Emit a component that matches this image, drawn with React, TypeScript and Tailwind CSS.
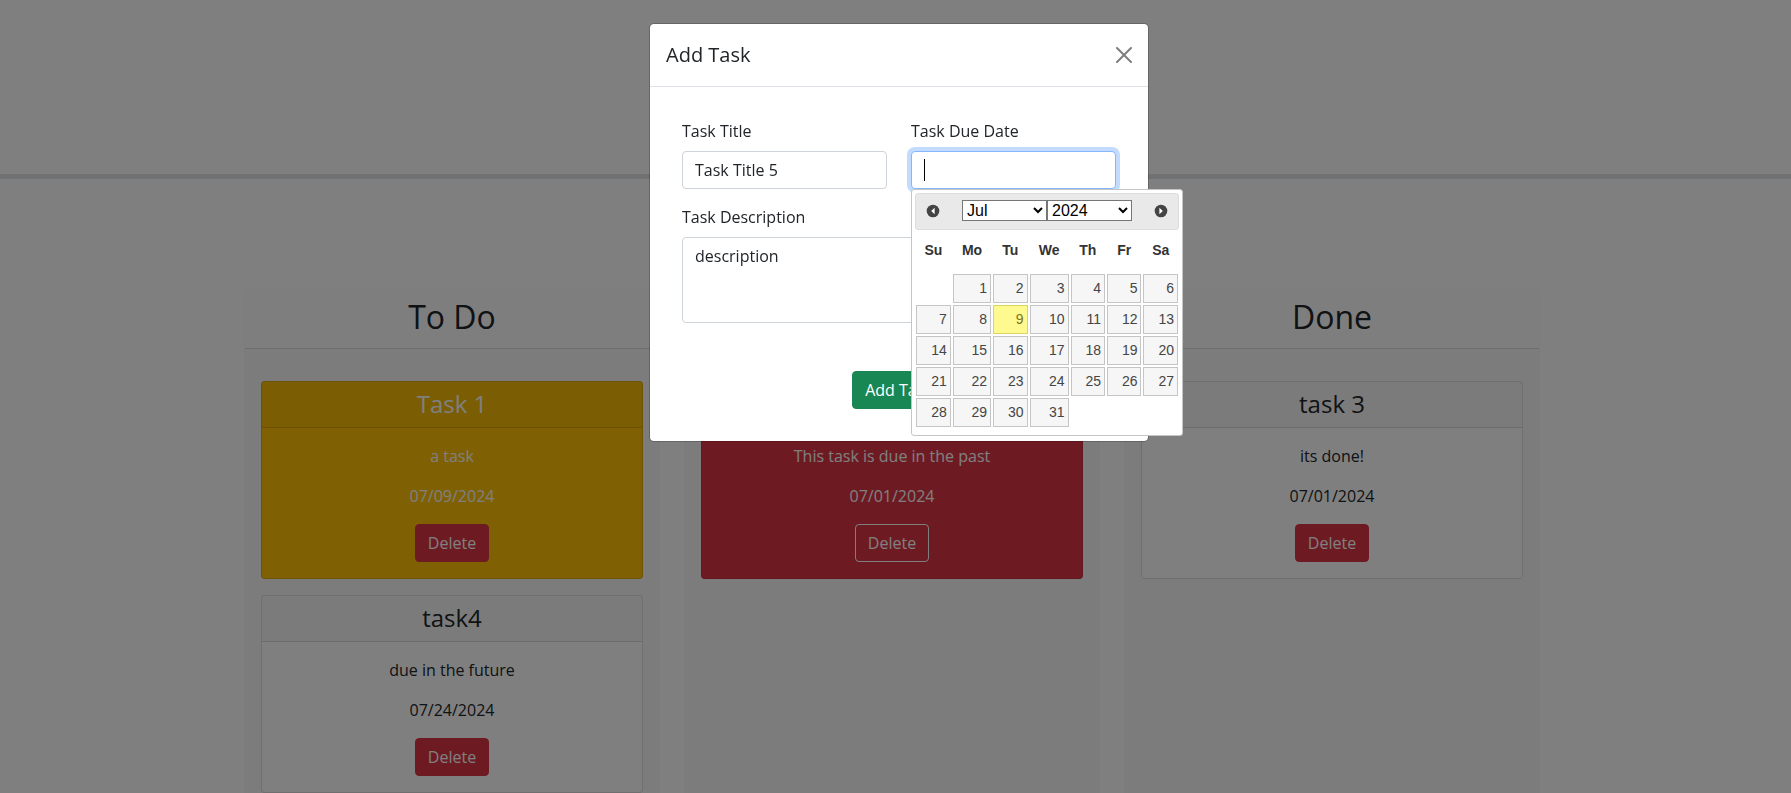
import { useState } from "react";

type Tone = "plain" | "warning" | "danger";
type Task = { title: string; description: string; due: string; tone: Tone };
type Lane = { name: string; tasks: Task[] };

const lanes: Lane[] = [
  {
    name: "To Do",
    tasks: [
      { title: "Task 1", description: "a task", due: "07/09/2024", tone: "warning" },
      { title: "task4", description: "due in the future", due: "07/24/2024", tone: "plain" },
    ],
  },
  {
    name: "In Progress",
    tasks: [
      { title: "task 2", description: "This task is due in the past", due: "07/01/2024", tone: "danger" },
    ],
  },
  {
    name: "Done",
    tasks: [{ title: "task 3", description: "its done!", due: "07/01/2024", tone: "plain" }],
  },
];

const cardTone: Record<Tone, string> = {
  plain: "bg-white text-[#212529]",
  warning: "bg-[#ffc107] text-white",
  danger: "bg-[#dc3545] text-white",
};

const months = ["Jan", "Feb", "Mar", "Apr", "May", "Jun", "Jul", "Aug", "Sep", "Oct", "Nov", "Dec"];
const years = ["2023", "2024", "2025"];
const weekdays = ["Su", "Mo", "Tu", "We", "Th", "Fr", "Sa"];
const weeks = Array.from({ length: 5 }, (_, w) =>
  Array.from({ length: 7 }, (_, d) => {
    const day = w * 7 + d;
    return day >= 1 && day <= 31 ? day : null;
  }),
);
const today = 9;

function TaskCard({ task }: { task: Task }) {
  return (
    <article className={`rounded border border-black/[.125] text-center ${cardTone[task.tone]}`}>
      <h4 className="border-b border-black/[.125] bg-black/[.03] px-4 pt-2 pb-[9px] text-2xl leading-7">
        {task.title}
      </h4>
      <div className="flex flex-col items-center gap-4 p-4">
        <p>{task.description}</p>
        <p>{task.due}</p>
        <button
          type="button"
          className={`rounded border bg-[#dc3545] px-3 py-[6px] text-white ${
            task.tone === "danger" ? "border-white" : "border-[#dc3545]"
          }`}
        >
          Delete
        </button>
      </div>
    </article>
  );
}

function CircleArrow({ flip = false }: { flip?: boolean }) {
  return (
    <svg viewBox="0 0 12 12" className={`size-3 overflow-visible ${flip ? "-scale-x-100" : ""}`} aria-hidden="true">
      <circle cx="6" cy="6" r="6.3" fill="#444" />
      <path d="M7.6 2.8v6.4L4.2 6z" fill="#fff" />
    </svg>
  );
}

function DatePicker() {
  const [month, setMonth] = useState("Jul");
  const [year, setYear] = useState("2024");
  const selectClass =
    "h-[21px] min-w-0 flex-1 border border-[#767676] bg-white text-base leading-[19px] text-black";
  return (
    <div className="absolute top-full left-0 z-10 h-[247px] w-[272px] rounded-[3px] border border-[#c5c5c5] bg-white p-[3px] font-['Liberation_Sans',Arial,sans-serif] text-[#333]">
      <div className="flex h-[37px] items-center justify-between rounded-[3px] border border-[#ddd] bg-[#e9e9e9] px-[11px] pb-[2px]">
        <button type="button" aria-label="Prev">
          <CircleArrow />
        </button>
        <div className="flex w-[170px]">
          <select aria-label="Month" value={month} onChange={(e) => setMonth(e.target.value)} className={selectClass}>
            {months.map((m) => (
              <option key={m}>{m}</option>
            ))}
          </select>
          <select aria-label="Year" value={year} onChange={(e) => setYear(e.target.value)} className={selectClass}>
            {years.map((y) => (
              <option key={y}>{y}</option>
            ))}
          </select>
        </div>
        <button type="button" aria-label="Next">
          <CircleArrow flip />
        </button>
      </div>
      <table className="w-full border-collapse text-[14px] leading-[21px]">
        <thead>
          <tr>
            {weekdays.map((d) => (
              <th key={d} scope="col" className="px-1 pt-[10px] pb-3 text-center font-bold">
                {d}
              </th>
            ))}
          </tr>
        </thead>
        <tbody>
          {weeks.map((week, i) => (
            <tr key={i}>
              {week.map((day, j) => (
                <td key={j} className="p-px">
                  {day !== null && (
                    <a
                      href="#"
                      className={`block border p-[3px] text-right ${
                        day === today
                          ? "border-[#dad55e] bg-[#fffa90] text-[#777620]"
                          : "border-[#c5c5c5] bg-[#f6f6f6] text-[#454545]"
                      }`}
                    >
                      {day}
                    </a>
                  )}
                </td>
              ))}
            </tr>
          ))}
        </tbody>
      </table>
    </div>
  );
}

function AddTaskModal() {
  const field = "w-full rounded border bg-white px-3 py-[6px] text-[#212529] outline-none";
  return (
    <div className="fixed inset-0 flex items-start justify-center bg-black/50 pt-[23px] pl-[7px]">
      <div
        role="dialog"
        aria-modal="true"
        aria-labelledby="modal-title"
        className="w-full max-w-[500px] rounded-[5px] border border-black/20 bg-white bg-clip-padding"
      >
        <div className="flex items-center justify-between border-b border-[#dee2e6] p-4">
          <h5 id="modal-title" className="text-xl leading-[30px]">
            Add Task
          </h5>
          <button type="button" aria-label="Close" className="opacity-50">
            <svg viewBox="0 0 16 16" className="size-4" fill="#000" aria-hidden="true">
              <path d="M.293.293a1 1 0 011.414 0L8 6.586 14.293.293a1 1 0 111.414 1.414L9.414 8l6.293 6.293a1 1 0 01-1.414 1.414L8 9.414l-6.293 6.293a1 1 0 01-1.414-1.414L6.586 8 .293 1.707a1 1 0 010-1.414z" />
            </svg>
          </button>
        </div>
        <form className="flex flex-col gap-4 p-8" onSubmit={(e) => e.preventDefault()}>
          <div className="grid grid-cols-2 gap-6">
            <div className="flex flex-col gap-2">
              <label htmlFor="task-title">Task Title</label>
              <input id="task-title" type="text" defaultValue="Task Title 5" className={`${field} border-[#ced4da]`} />
            </div>
            <div className="flex flex-col gap-2">
              <label htmlFor="task-due">Task Due Date</label>
              <div className="relative">
                <input
                  id="task-due"
                  type="text"
                  autoFocus
                  className={`${field} block border-[#86b7fe] caret-transparent ring-4 ring-[#0d6efd]/25`}
                />
                <span aria-hidden="true" className="absolute inset-y-2 left-[13px] w-px bg-black" />
                <DatePicker />
              </div>
            </div>
          </div>
          <div className="flex flex-col gap-2">
            <label htmlFor="task-description">Task Description</label>
            <textarea
              id="task-description"
              rows={3}
              defaultValue="description"
              className={`${field} resize-none border-[#ced4da]`}
            />
          </div>
          <button
            type="submit"
            className="mt-8 self-center rounded border border-[#198754] bg-[#198754] px-3 py-[6px] text-white"
          >
            Add Task
          </button>
        </form>
      </div>
    </div>
  );
}

export default function App() {
  return (
    <div className="h-screen overflow-hidden bg-white font-['Open_Sans','Noto_Sans',sans-serif] text-base leading-6 text-[#212529]">
      <header className="h-[179px] border-b-[5px] border-[#dee2e6]" />
      <main className="pt-[110px] pr-[7px]">
        <div className="mx-auto grid min-h-screen max-w-[1296px] grid-cols-3 gap-6">
          {lanes.map((lane) => (
            <section key={lane.name} className="rounded border border-transparent bg-[#f8f9fa] bg-clip-border">
              <h2 className="rounded-t border-b border-black/[.125] bg-[#fdfdfe] pt-2 pb-3 text-center text-[32px] leading-[38px]">
                {lane.name}
              </h2>
              <div className="flex flex-col gap-4 px-4 py-8">
                {lane.tasks.map((task) => (
                  <TaskCard key={task.title} task={task} />
                ))}
              </div>
            </section>
          ))}
        </div>
      </main>
      <AddTaskModal />
    </div>
  );
}
